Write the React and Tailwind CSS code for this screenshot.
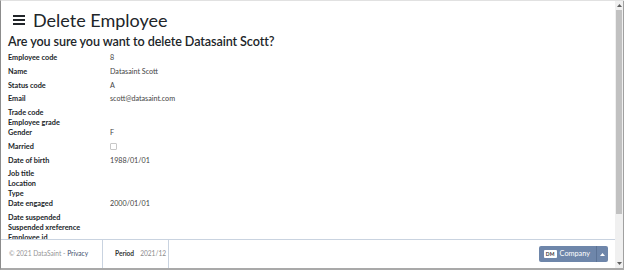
import React from 'react';

const rows = [
  { label: 'Employee code', value: '8' },
  { label: 'Name', value: 'Datasaint Scott' },
  { label: 'Status code', value: 'A' },
  { label: 'Email', value: 'scott@datasaint.com' },
  { label: 'Trade code' },
  { label: 'Employee grade' },
  { label: 'Gender', value: 'F' },
  { label: 'Married', check: true },
  { label: 'Date of birth', value: '1988/01/01' },
  { label: 'Job title' },
  { label: 'Location' },
  { label: 'Type' },
  { label: 'Date engaged', value: '2000/01/01' },
  { label: 'Date suspended' },
  { label: 'Suspended xreference' },
  { label: 'Employee id' },
];

const font = { fontFamily: 'Lato, "Noto Sans", sans-serif' };

const Row = ({ row }) => {
  const tall = row.value || row.check;
  return (
    <div className={`flex items-start ${tall ? 'h-[13.8px]' : 'h-[9.9px]'}`}>
      <div className="w-[102px] text-[7.3px] leading-[10px] font-bold text-[#212529]">{row.label}</div>
      {row.value && <div className="text-[7.2px] leading-[10px] text-[#444]">{row.value}</div>}
      {row.check && (
        <div className="mt-[1px] w-[7px] h-[7px] rounded-[1px] border border-[#c8c8c8] bg-white" />
      )}
    </div>
  );
};

const App = () => {
  return (
    <div
      className="w-[624px] h-[270px] flex bg-white border-l border-l-[#8c8c8c] border-t border-t-[#e1e1e1] border-b-2 border-b-[#a9a9a9] overflow-hidden"
      style={font}
    >
      <div className="flex-1 flex flex-col min-w-0">
        <div className="flex-1 overflow-hidden px-[7px]">
          <div className="flex items-center h-[32px] pt-[6px]">
            <div className="ml-[5px] mr-[8px] flex flex-col gap-[2px] w-[12px]">
              <span className="h-[2px] bg-[#212529]" />
              <span className="h-[2px] bg-[#212529]" />
              <span className="h-[2px] bg-[#212529]" />
            </div>
            <h1 className="text-[18px] leading-[24px] text-[#212529]">Delete Employee</h1>
          </div>
          <h2 className="text-[12.6px] leading-[18px] font-semibold text-[#212529] mb-[2px] tracking-[-0.1px]">
            Are you sure you want to delete Datasaint Scott?
          </h2>
          {rows.map((r) => (
            <Row key={r.label} row={r} />
          ))}
        </div>
        <div className="h-[29px] border-t border-[#c9d3e0] flex items-stretch text-[6.6px] bg-white whitespace-nowrap">
          <div className="w-[102px] border-r border-[#c9d3e0] flex items-center pl-[8px] text-[#959595]">
            © 2021 DataSaint -&nbsp;<span className="text-[#3c4b6b]">Privacy</span>
          </div>
          <div className="w-[66px] border-r border-[#c9d3e0] flex items-center pl-[12px] gap-[6px]">
            <span className="font-bold text-[#333]">Period</span>
            <span className="text-[#8a8a8a]">2021/12</span>
          </div>
          <div className="flex-1 flex items-center justify-end pr-[7px]">
            <div className="flex h-[16px] rounded-[2px] bg-[#6e86aa] text-white overflow-hidden">
              <div className="flex items-center pl-[5px] pr-[6px] gap-[3px]">
                <span className="bg-white text-[#333] text-[5px] font-bold leading-[8px] px-[1px] rounded-[1px] w-[13px] text-center">DM</span>
                <span className="text-[7.3px]">Company</span>
              </div>
              <div className="w-[12px] border-l border-[#5c7396] flex items-center justify-center">
                <svg width="5" height="3" viewBox="0 0 5 3"><path d="M0 3 L2.5 0 L5 3 Z" fill="#fff" /></svg>
              </div>
            </div>
          </div>
        </div>
      </div>
      <div className="w-[9px] flex flex-col bg-[#f0f0f0] border-r border-[#a0a0a0]">
        <div className="h-[9px] flex items-center justify-center">
          <svg width="5" height="3" viewBox="0 0 5 3"><path d="M0 3 L2.5 0 L5 3 Z" fill="#606060" /></svg>
        </div>
        <div className="h-[204px] mx-[1px] bg-[#c1c1c1]" />
        <div className="flex-1" />
        <div className="h-[9px] flex items-center justify-center">
          <svg width="5" height="3" viewBox="0 0 5 3"><path d="M0 0 L2.5 3 L5 0 Z" fill="#606060" /></svg>
        </div>
      </div>
    </div>
  );
};

export default App;
